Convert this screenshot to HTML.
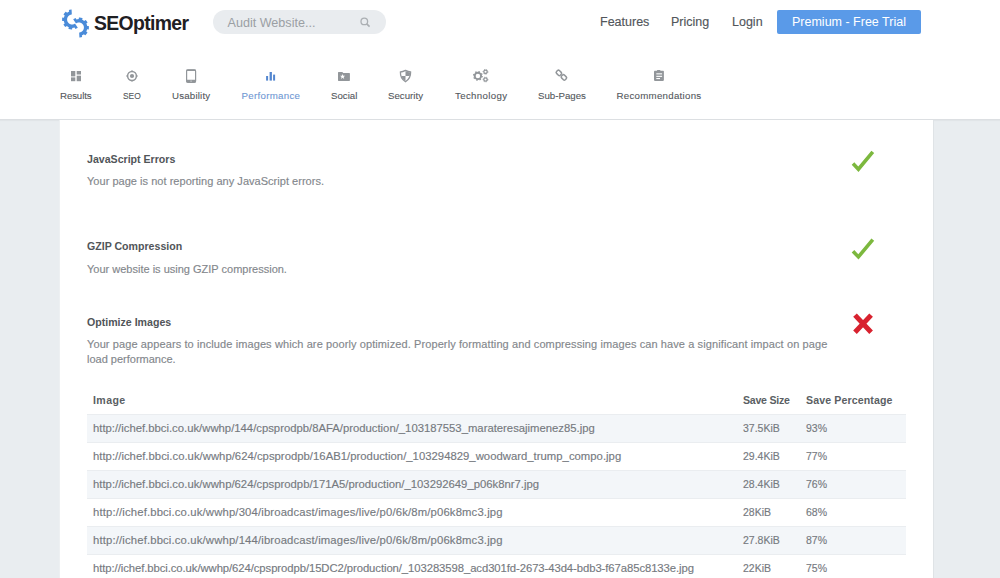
<!DOCTYPE html>
<html><head><meta charset="utf-8">
<style>
*{margin:0;padding:0;box-sizing:border-box}
html,body{width:1000px;height:578px;overflow:hidden;background:#e9edf0;font-family:"Liberation Sans",sans-serif}
.abs{position:absolute;white-space:nowrap;line-height:1}
#hdr{position:absolute;left:0;top:0;width:1000px;height:120px;background:#fff;border-bottom:1px solid #dcdfe2;box-shadow:0 1px 1px rgba(0,0,0,.03)}
#card{position:absolute;left:59px;top:120px;width:875px;height:470px;background:#fff;border-left:1px solid #edf0f2;border-right:1px solid #dfe3e6}
.nav{font-size:12.5px;color:#52565b;-webkit-text-stroke:0.15px #52565b}
.btn{position:absolute;left:777px;top:10px;width:144px;height:24px;background:#5a9ae8;border-radius:2px}
.btn span{color:#fff}
.search{position:absolute;left:212.5px;top:10px;width:173px;height:24px;background:#e9ecef;border-radius:12px}
.tab{font-size:9.7px;color:#53575c;-webkit-text-stroke:0.1px}
.tab.act{color:#6e97d3}
.h{font-size:10.6px;font-weight:bold;color:#515559}
.d{font-size:11px;color:#83878c;-webkit-text-stroke:0.15px #83878c}
.row{position:absolute;left:87px;width:819px;height:28px;border-top:1px solid #eaedf0}
.row.s{background:#f3f6f9}
.t{font-size:11.3px;color:#767a7f;-webkit-text-stroke:0.15px #767a7f}
.th{font-size:10.6px;font-weight:bold;color:#5b5f64}
</style></head>
<body>
<div id="hdr">
  <!-- logo -->
  <svg style="position:absolute;left:0;top:0" width="100" height="45" viewBox="0 0 100 45"><path fill="#4a8bd9" d="M71.58,9.51 L71.27,9.53 L70.96,9.56 L70.66,9.60 L70.35,9.65 L70.05,9.71 L69.75,9.78 L69.45,9.86 L69.15,9.94 L68.86,10.04 L69.14,11.64 L68.89,11.74 L68.66,11.84 L68.42,11.95 L68.19,12.06 L67.96,12.19 L67.74,12.32 L67.52,12.46 L67.31,12.60 L67.10,12.75 L65.90,11.66 L65.66,11.85 L65.43,12.05 L65.20,12.26 L64.98,12.48 L64.77,12.70 L64.56,12.93 L64.36,13.17 L64.17,13.41 L63.99,13.66 L63.81,13.91 L63.64,14.17 L63.48,14.43 L64.73,15.47 L64.61,15.70 L64.50,15.93 L64.39,16.16 L64.29,16.40 L64.20,16.65 L64.12,16.89 L64.04,17.14 L63.97,17.39 L63.91,17.64 L62.28,17.59 L62.23,17.89 L62.19,18.19 L62.15,18.50 L62.12,18.81 L62.11,19.12 L62.10,19.42 L62.10,19.73 L62.11,20.04 L62.14,20.35 L62.17,20.66 L62.21,20.96 L63.83,20.98 L63.88,21.24 L63.94,21.49 L64.00,21.74 L64.08,21.99 L64.16,22.23 L64.25,22.48 L64.34,22.72 L64.44,22.96 L64.55,23.19 L64.67,23.42 L63.41,24.44 L63.56,24.71 L63.73,24.97 L63.90,25.22 L64.08,25.47 L64.27,25.72 L64.46,25.95 L64.66,26.19 L64.87,26.41 L65.09,26.63 L65.31,26.85 L65.54,27.05 L66.79,26.01 L66.99,26.17 L67.20,26.32 L67.41,26.47 L67.63,26.61 L67.85,26.75 L68.08,26.88 L68.31,27.00 L68.54,27.11 L68.78,27.21 L68.43,28.80 L68.72,28.91 L69.01,29.01 L69.30,29.10 L69.60,29.18 L69.90,29.26 L70.20,29.32 L70.51,29.37 L70.81,29.42 L71.12,29.45 L71.43,29.48 L71.73,29.49 L72.04,29.50 L72.31,27.90 L72.57,27.89 L72.83,27.87 L73.08,27.84 L73.34,27.81 L73.60,27.77 L73.85,27.72 L74.10,27.66 L74.35,27.59 L74.60,27.52 L75.37,28.95 L75.66,28.84 L75.95,28.73 L76.23,28.61 L76.51,28.48 L76.78,28.33 L77.05,28.19 L77.32,28.03 L77.58,27.86 L77.84,27.69 L74.97,23.60 L74.84,23.68 L74.71,23.76 L74.58,23.84 L74.44,23.92 L74.30,23.99 L74.17,24.05 L74.02,24.11 L73.88,24.17 L73.74,24.22 L73.59,24.27 L73.44,24.32 L73.29,24.36 L73.14,24.39 L72.99,24.42 L72.84,24.45 L72.69,24.47 L72.53,24.48 L72.38,24.49 L72.23,24.50 L72.07,24.50 L71.92,24.50 L71.76,24.49 L71.61,24.48 L71.46,24.46 L71.30,24.44 L71.15,24.41 L71.00,24.38 L70.85,24.34 L70.70,24.30 L70.55,24.26 L70.41,24.21 L70.26,24.15 L70.12,24.09 L69.98,24.03 L69.84,23.96 L69.71,23.89 L69.57,23.81 L69.44,23.73 L69.31,23.65 L69.18,23.56 L69.06,23.47 L68.94,23.37 L68.82,23.28 L68.71,23.17 L68.60,23.07 L68.49,22.96 L68.38,22.84 L68.28,22.73 L68.18,22.61 L68.09,22.49 L68.00,22.36 L67.91,22.23 L67.83,22.10 L67.75,21.97 L67.68,21.83 L67.61,21.70 L67.54,21.56 L67.48,21.42 L67.42,21.27 L67.37,21.13 L67.32,20.98 L67.28,20.83 L67.24,20.68 L67.21,20.53 L67.18,20.38 L67.15,20.23 L67.13,20.08 L67.12,19.92 L67.11,19.77 L67.10,19.62 L67.10,19.46 L67.10,19.31 L67.11,19.15 L67.13,19.00 L67.14,18.85 L67.17,18.69 L67.19,18.54 L67.22,18.39 L67.26,18.24 L67.30,18.09 L67.35,17.95 L67.40,17.80 L67.45,17.66 L67.51,17.51 L67.57,17.37 L67.64,17.24 L67.71,17.10 L67.79,16.96 L67.87,16.83 L67.95,16.70 L68.04,16.58 L68.14,16.45 L68.23,16.33 L68.33,16.22 L68.43,16.10 L68.54,15.99 L68.65,15.88 L68.76,15.78 L68.88,15.68 L69.00,15.58 L69.12,15.48 L69.25,15.39 L69.37,15.31 L69.50,15.23 L69.64,15.15 L69.77,15.07 L69.91,15.00 L70.05,14.94 L70.19,14.88 L70.34,14.82 L70.48,14.77 L70.63,14.72 L70.78,14.68 L70.92,14.64 L71.07,14.61 L71.23,14.58 L71.38,14.55 L71.53,14.53 L71.68,14.52 L71.84,14.51Z"/><path fill="#4a8bd9" d="M79.42,37.49 L79.73,37.47 L80.04,37.44 L80.34,37.40 L80.65,37.35 L80.95,37.29 L81.25,37.22 L81.55,37.14 L81.85,37.06 L82.14,36.96 L81.86,35.36 L82.11,35.26 L82.34,35.16 L82.58,35.05 L82.81,34.94 L83.04,34.81 L83.26,34.68 L83.48,34.54 L83.69,34.40 L83.90,34.25 L85.10,35.34 L85.34,35.15 L85.57,34.95 L85.80,34.74 L86.02,34.52 L86.23,34.30 L86.44,34.07 L86.64,33.83 L86.83,33.59 L87.01,33.34 L87.19,33.09 L87.36,32.83 L87.52,32.57 L86.27,31.53 L86.39,31.30 L86.50,31.07 L86.61,30.84 L86.71,30.60 L86.80,30.35 L86.88,30.11 L86.96,29.86 L87.03,29.61 L87.09,29.36 L88.72,29.41 L88.77,29.11 L88.81,28.81 L88.85,28.50 L88.88,28.19 L88.89,27.88 L88.90,27.58 L88.90,27.27 L88.89,26.96 L88.86,26.65 L88.83,26.34 L88.79,26.04 L87.17,26.02 L87.12,25.76 L87.06,25.51 L87.00,25.26 L86.92,25.01 L86.84,24.77 L86.75,24.52 L86.66,24.28 L86.56,24.04 L86.45,23.81 L86.33,23.58 L87.59,22.56 L87.44,22.29 L87.27,22.03 L87.10,21.78 L86.92,21.53 L86.73,21.28 L86.54,21.05 L86.34,20.81 L86.13,20.59 L85.91,20.37 L85.69,20.15 L85.46,19.95 L84.21,20.99 L84.01,20.83 L83.80,20.68 L83.59,20.53 L83.37,20.39 L83.15,20.25 L82.92,20.12 L82.69,20.00 L82.46,19.89 L82.22,19.79 L82.57,18.20 L82.28,18.09 L81.99,17.99 L81.70,17.90 L81.40,17.82 L81.10,17.74 L80.80,17.68 L80.49,17.63 L80.19,17.58 L79.88,17.55 L79.57,17.52 L79.27,17.51 L78.96,17.50 L78.69,19.10 L78.43,19.11 L78.17,19.13 L77.92,19.16 L77.66,19.19 L77.40,19.23 L77.15,19.28 L76.90,19.34 L76.65,19.41 L76.40,19.48 L75.63,18.05 L75.34,18.16 L75.05,18.27 L74.77,18.39 L74.49,18.52 L74.22,18.67 L73.95,18.81 L73.68,18.97 L73.42,19.14 L73.16,19.31 L76.03,23.40 L76.16,23.32 L76.29,23.24 L76.42,23.16 L76.56,23.08 L76.70,23.01 L76.83,22.95 L76.98,22.89 L77.12,22.83 L77.26,22.78 L77.41,22.73 L77.56,22.68 L77.71,22.64 L77.86,22.61 L78.01,22.58 L78.16,22.55 L78.31,22.53 L78.47,22.52 L78.62,22.51 L78.77,22.50 L78.93,22.50 L79.08,22.50 L79.24,22.51 L79.39,22.52 L79.54,22.54 L79.70,22.56 L79.85,22.59 L80.00,22.62 L80.15,22.66 L80.30,22.70 L80.45,22.74 L80.59,22.79 L80.74,22.85 L80.88,22.91 L81.02,22.97 L81.16,23.04 L81.29,23.11 L81.43,23.19 L81.56,23.27 L81.69,23.35 L81.82,23.44 L81.94,23.53 L82.06,23.63 L82.18,23.72 L82.29,23.83 L82.40,23.93 L82.51,24.04 L82.62,24.16 L82.72,24.27 L82.82,24.39 L82.91,24.51 L83.00,24.64 L83.09,24.77 L83.17,24.90 L83.25,25.03 L83.32,25.17 L83.39,25.30 L83.46,25.44 L83.52,25.58 L83.58,25.73 L83.63,25.87 L83.68,26.02 L83.72,26.17 L83.76,26.32 L83.79,26.47 L83.82,26.62 L83.85,26.77 L83.87,26.92 L83.88,27.08 L83.89,27.23 L83.90,27.38 L83.90,27.54 L83.90,27.69 L83.89,27.85 L83.87,28.00 L83.86,28.15 L83.83,28.31 L83.81,28.46 L83.78,28.61 L83.74,28.76 L83.70,28.91 L83.65,29.05 L83.60,29.20 L83.55,29.34 L83.49,29.49 L83.43,29.63 L83.36,29.76 L83.29,29.90 L83.21,30.04 L83.13,30.17 L83.05,30.30 L82.96,30.42 L82.86,30.55 L82.77,30.67 L82.67,30.78 L82.57,30.90 L82.46,31.01 L82.35,31.12 L82.24,31.22 L82.12,31.32 L82.00,31.42 L81.88,31.52 L81.75,31.61 L81.63,31.69 L81.50,31.77 L81.36,31.85 L81.23,31.93 L81.09,32.00 L80.95,32.06 L80.81,32.12 L80.66,32.18 L80.52,32.23 L80.37,32.28 L80.22,32.32 L80.08,32.36 L79.93,32.39 L79.77,32.42 L79.62,32.45 L79.47,32.47 L79.32,32.48 L79.16,32.49Z"/></svg>
  <span class="abs" style="left:94px;top:13.5px;font-size:19.4px;font-weight:bold;color:#1f2023;letter-spacing:-0.65px">SEOptimer</span>
  <div class="search"><span class="abs" style="left:15px;top:6.6px;font-size:12.6px;color:#9b9fa4">Audit Website...</span></div>
  <span class="abs nav" style="left:600px;top:16px">Features</span>
  <span class="abs nav" style="left:671px;top:16px">Pricing</span>
  <span class="abs nav" style="left:732px;top:16px">Login</span>
  <div class="btn"><span class="abs" style="left:15px;top:6px;font-size:12.5px">Premium - Free Trial</span></div>

  <svg style="position:absolute;left:0;top:0" width="1000" height="119" viewBox="0 0 1000 119">
<g fill="#92969a">
 <rect x="71" y="71" width="4.3" height="5.4"/>
 <rect x="71" y="77.4" width="4.3" height="3.8"/>
 <rect x="76.7" y="71" width="4.3" height="3.5"/>
 <rect x="76.7" y="75.7" width="4.3" height="5.5"/>
</g>
<g>
 <circle cx="132" cy="76" r="4.4" fill="none" stroke="#92969a" stroke-width="1.5"/>
 <circle cx="132" cy="76" r="2.1" fill="#92969a"/>
 <path d="M132,70.4v1.6M132,80v1.6M126.4,76h1.6M136,76h1.6" stroke="#92969a" stroke-width="1.6"/>
</g>
<g>
 <rect x="186.6" y="69.9" width="9" height="12.5" rx="1.4" fill="none" stroke="#92969a" stroke-width="1.2"/>
 <rect x="186.2" y="79.8" width="9.8" height="2.8" rx="1" fill="#92969a"/>
 <rect x="186.2" y="69.4" width="9.8" height="1.6" rx="0.8" fill="#92969a"/>
 <rect x="190.2" y="80.6" width="1.8" height="1" fill="#fff" opacity=".5"/>
</g>
<g fill="#5386cf">
 <rect x="266.1" y="76" width="2" height="4.6"/>
 <rect x="269.6" y="72" width="2.3" height="8.6"/>
 <rect x="273.1" y="74.6" width="2" height="6"/>
</g>
<g>
 <path d="M338,72.6 Q338,72 338.6,72 L342.3,72 L343.3,73 L349.3,73 Q349.9,73 349.9,73.6 L349.9,80.3 Q349.9,80.9 349.3,80.9 L338.6,80.9 Q338,80.9 338,80.3Z" fill="#92969a"/>
 <path d="M342.60,74.00 L343.28,75.77 L345.17,75.87 L343.69,77.06 L344.19,78.88 L342.60,77.85 L341.01,78.88 L341.51,77.06 L340.03,75.87 L341.92,75.77Z" fill="#fff"/>
</g>
<g>
 <path d="M405.5,70.4 Q408.3,71.9 410.6,72 Q410.8,78.6 405.5,81.7 Q400.2,78.6 400.4,72 Q402.7,71.9 405.5,70.4Z" fill="none" stroke="#92969a" stroke-width="1.3"/>
 <path d="M405.5,71 Q408,72.4 410.1,72.5 Q410.1,74.3 409.7,76 L405.5,76Z" fill="#92969a"/>
 <path d="M405.5,76 L401.3,76 Q402.4,79.6 405.5,81.1Z" fill="#92969a"/>
</g>
<g fill="none" stroke="#92969a">
 <circle cx="477.9" cy="75.9" r="3.2" stroke-width="1.9"/>
 <circle cx="477.9" cy="75.9" r="4.3" stroke-width="1.3" stroke-dasharray="1.5 1.88"/>
 <circle cx="485.5" cy="71.8" r="1.7" stroke-width="1.3"/>
 <circle cx="485.5" cy="71.8" r="2.4" stroke-width="0.9" stroke-dasharray="1 1.2"/>
 <circle cx="485.5" cy="79.5" r="1.7" stroke-width="1.3"/>
 <circle cx="485.5" cy="79.5" r="2.4" stroke-width="0.9" stroke-dasharray="1 1.2"/>
</g>
<g fill="none" stroke="#92969a" stroke-width="1.5">
 <rect x="556.3" y="70.9" width="5.2" height="4" rx="1.3" transform="rotate(45 558.9 72.9)"/>
 <rect x="561.3" y="75.4" width="5.2" height="4" rx="1.3" transform="rotate(45 563.9 77.4)"/>
</g>
<g>
 <rect x="654" y="70.8" width="9.9" height="10.1" rx="0.8" fill="#92969a"/>
 <rect x="657.1" y="70" width="3.2" height="1.6" fill="#92969a"/>
 <rect x="656.3" y="73.3" width="5.8" height="1.1" fill="#fff"/>
 <rect x="656.3" y="75.8" width="5.8" height="1.1" fill="#fff"/>
 <rect x="656.3" y="78" width="3.7" height="1.1" fill="#fff"/>
</g>
<g fill="none" stroke="#abafb3" stroke-width="1.3">
 <circle cx="364.3" cy="21.4" r="3.3"/>
 <path d="M366.7,23.8 L369.6,26.6" stroke-width="1.6"/>
</g>
</svg>

  <span class="abs tab" style="left:60px;top:91px;letter-spacing:-0.12px">Results</span>
  <span class="abs tab" style="left:123px;top:91px;transform:scaleX(0.87);transform-origin:0 0">SEO</span>
  <span class="abs tab" style="left:172px;top:91px;letter-spacing:0.2px">Usability</span>
  <span class="abs tab act" style="left:241.5px;top:91px;letter-spacing:0.3px">Performance</span>
  <span class="abs tab" style="left:331px;top:91px">Social</span>
  <span class="abs tab" style="left:388px;top:91px">Security</span>
  <span class="abs tab" style="left:455px;top:91px;letter-spacing:0.33px">Technology</span>
  <span class="abs tab" style="left:538px;top:91px">Sub-Pages</span>
  <span class="abs tab" style="left:616.5px;top:91px;letter-spacing:0.28px">Recommendations</span>
</div>
<div id="card"></div>

<svg style="position:absolute;left:0;top:0" width="1000" height="578" viewBox="0 0 1000 578">
<path d="M853,163.6 L858.4,169.2 L872.8,151.9" fill="none" stroke="#7cb83e" stroke-width="3.6" stroke-linecap="butt"/>
<path d="M853,251.3 L858.4,256.9 L872.8,239.6" fill="none" stroke="#7cb83e" stroke-width="3.6" stroke-linecap="butt"/>
<path d="M855,315.1 L871.1,332.2 M871.1,315.1 L855,332.2" fill="none" stroke="#d8222f" stroke-width="5"/>
</svg>
<span class="abs h" style="left:87px;top:154px">JavaScript Errors</span>
<span class="abs d" style="left:87px;top:176px;letter-spacing:0.03px">Your page is not reporting any JavaScript errors.</span>
<span class="abs h" style="left:87px;top:241px">GZIP Compression</span>
<span class="abs d" style="left:87px;top:264px">Your website is using GZIP compression.</span>
<span class="abs h" style="left:87px;top:317px">Optimize Images</span>
<span class="abs d" style="left:87px;top:339px;letter-spacing:0.1px">Your page appears to include images which are poorly optimized. Properly formatting and compressing images can have a significant impact on page</span>
<span class="abs d" style="left:87px;top:354px">load performance.</span>

<span class="abs th" style="left:93px;top:395px;letter-spacing:0.4px">Image</span>
<span class="abs th" style="left:743px;top:395px;letter-spacing:-0.25px">Save Size</span>
<span class="abs th" style="left:806px;top:395px;letter-spacing:0.12px">Save Percentage</span>

<div class="row s" style="top:414px"><span class="abs t" style="left:6px;top:8px;letter-spacing:0px">http://ichef.bbci.co.uk/wwhp/144/cpsprodpb/8AFA/production/_103187553_marateresajimenez85.jpg</span><span class="abs t" style="left:656px;top:8px;font-size:10.5px">37.5KiB</span><span class="abs t" style="left:719px;top:8px;font-size:10.5px">93%</span></div>
<div class="row" style="top:442px"><span class="abs t" style="left:6px;top:8px;letter-spacing:0.02px">http://ichef.bbci.co.uk/wwhp/624/cpsprodpb/16AB1/production/_103294829_woodward_trump_compo.jpg</span><span class="abs t" style="left:656px;top:8px;font-size:10.5px">29.4KiB</span><span class="abs t" style="left:719px;top:8px;font-size:10.5px">77%</span></div>
<div class="row s" style="top:470px"><span class="abs t" style="left:6px;top:8px;letter-spacing:0.01px">http://ichef.bbci.co.uk/wwhp/624/cpsprodpb/171A5/production/_103292649_p06k8nr7.jpg</span><span class="abs t" style="left:656px;top:8px;font-size:10.5px">28.4KiB</span><span class="abs t" style="left:719px;top:8px;font-size:10.5px">76%</span></div>
<div class="row" style="top:498px"><span class="abs t" style="left:6px;top:8px;letter-spacing:0.15px">http://ichef.bbci.co.uk/wwhp/304/ibroadcast/images/live/p0/6k/8m/p06k8mc3.jpg</span><span class="abs t" style="left:656px;top:8px;font-size:10.5px">28KiB</span><span class="abs t" style="left:719px;top:8px;font-size:10.5px">68%</span></div>
<div class="row s" style="top:526px"><span class="abs t" style="left:6px;top:8px;letter-spacing:0.15px">http://ichef.bbci.co.uk/wwhp/144/ibroadcast/images/live/p0/6k/8m/p06k8mc3.jpg</span><span class="abs t" style="left:656px;top:8px;font-size:10.5px">27.8KiB</span><span class="abs t" style="left:719px;top:8px;font-size:10.5px">87%</span></div>
<div class="row" style="top:554px"><span class="abs t" style="left:6px;top:8px;letter-spacing:-0.075px">http://ichef.bbci.co.uk/wwhp/624/cpsprodpb/15DC2/production/_103283598_acd301fd-2673-43d4-bdb3-f67a85c8133e.jpg</span><span class="abs t" style="left:656px;top:8px;font-size:10.5px">22KiB</span><span class="abs t" style="left:719px;top:8px;font-size:10.5px">75%</span></div>

</body></html>
